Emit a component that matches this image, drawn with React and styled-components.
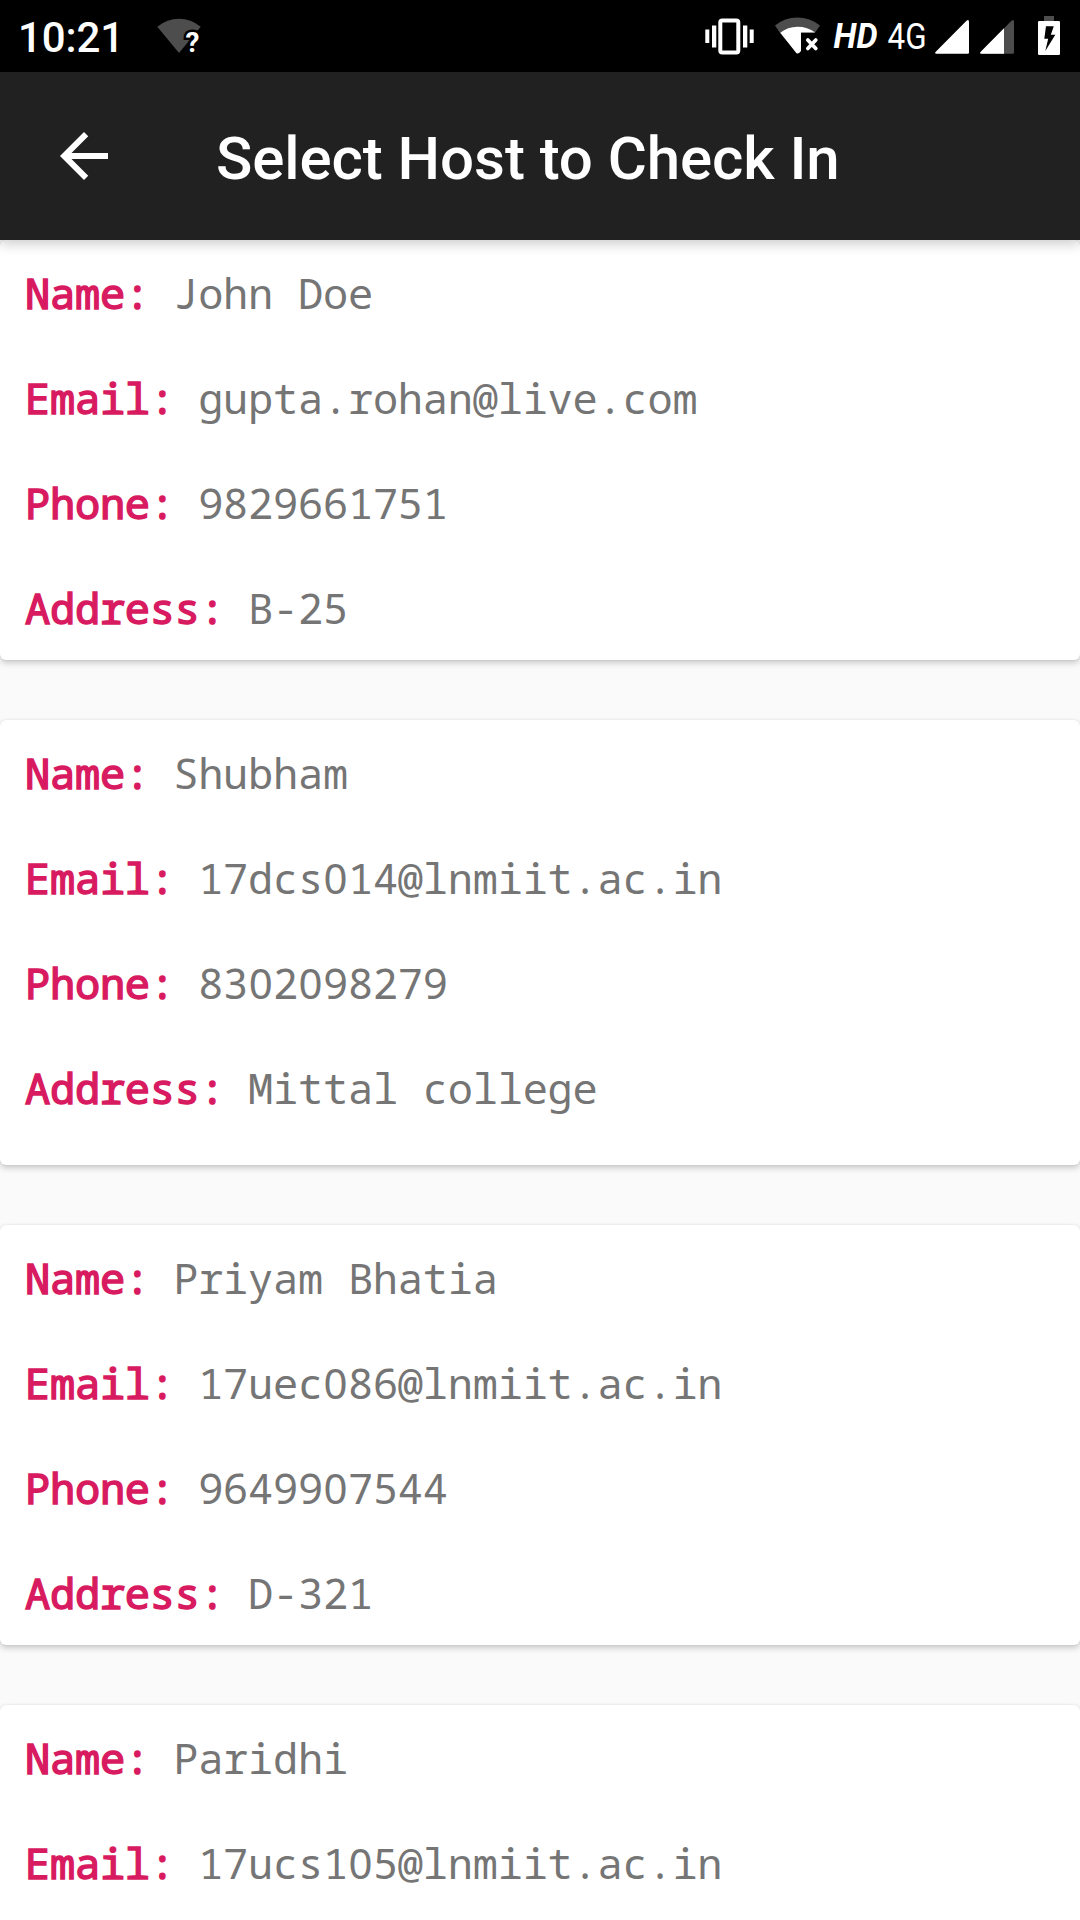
import React from "react";
import styled, { createGlobalStyle } from "styled-components";

const Global = createGlobalStyle`
  * { box-sizing: border-box; }
  html, body { margin: 0; padding: 0; background: #fafafa; }
`;

const Screen = styled.div`
  width: 1080px;
  height: 1920px;
  overflow: hidden;
  display: flex;
  flex-direction: column;
  background: #fafafa;
  font-family: Roboto, sans-serif;
`;

const StatusBar = styled.div`
  flex: none;
  height: 72px;
  padding: 0 18px;
  display: flex;
  align-items: center;
  justify-content: space-between;
  background: #000;
  color: #fff;
`;

const StatusGroup = styled.div`
  display: flex;
  align-items: center;
`;

const Clock = styled.span`
  width: 138px;
  padding-top: 3px;
  font-size: 42px;
  line-height: 50px;
  font-weight: 500;
  letter-spacing: -0.1px;
`;

const StatusIcon = styled.svg`
  display: block;
  flex: none;
  height: 72px;
  width: ${(p) => p.$w}px;
  margin-right: ${(p) => p.$gap || 0}px;
`;

const AppBar = styled.header`
  flex: none;
  height: 168px;
  padding-left: 48px;
  display: flex;
  align-items: center;
  background: #212121;
  color: #fff;
  position: relative;
  z-index: 1;
  box-shadow: 0 4px 12px rgba(0, 0, 0, 0.2);
`;

const BackButton = styled.button`
  width: 72px;
  height: 72px;
  padding: 0;
  border: 0;
  background: none;
  color: inherit;
`;

const BackIcon = styled.svg`
  display: block;
  width: 72px;
  height: 72px;
`;

const Title = styled.h1`
  margin: 0 0 0 96px;
  padding-top: 6px;
  font-size: 60px;
  line-height: 70px;
  font-weight: 500;
  letter-spacing: -0.07px;
  white-space: nowrap;
`;

const List = styled.main`
  flex: 1;
  min-height: 0;
  display: flex;
  flex-direction: column;
  gap: 60px;
`;

const Card = styled.section`
  flex: none;
  padding: 0 25px;
  height: ${(p) => (p.$roomy ? 445 : 420)}px;
  background: #fff;
  border-radius: 6px;
  box-shadow: 0 3px 6px rgba(0, 0, 0, 0.2), 0 0 2px rgba(0, 0, 0, 0.1);
`;

const Row = styled.div`
  height: 105px;
  padding-top: 28px;
  font-family: "Noto Sans Mono", "DejaVu Sans Mono", monospace;
  font-size: 42px;
  line-height: 50px;
  letter-spacing: -0.24px;
  white-space: pre;
  color: #757575;
`;

const Label = styled.span`
  margin-right: -1.6px;
  color: #d81b60;
  -webkit-text-stroke: 1.5px #d81b60;
`;

/* The mono face slashes its zero; the proportional one keeps it open. */
const OpenZero = styled.span`
  margin: 0 0.014em;
  font-family: "Noto Sans", sans-serif;
  line-height: 0;
`;

const hosts = [
  { name: "John Doe", email: "gupta.rohan@live.com", phone: "9829661751", address: "B-25" },
  { name: "Shubham", email: "17dcs014@lnmiit.ac.in", phone: "8302098279", address: "Mittal college", roomy: true },
  { name: "Priyam Bhatia", email: "17uec086@lnmiit.ac.in", phone: "9649907544", address: "D-321" },
  { name: "Paridhi", email: "17ucs105@lnmiit.ac.in" },
];

const fields = [
  ["Name", "name"],
  ["Email", "email"],
  ["Phone", "phone"],
  ["Address", "address"],
];

function Value({ text }) {
  return text
    .split(/(0)/)
    .map((part, i) => (part === "0" ? <OpenZero key={i}>0</OpenZero> : part));
}

function HostCard({ host }) {
  return (
    <Card $roomy={host.roomy}>
      {fields
        .filter(([, key]) => host[key])
        .map(([label, key]) => (
          <Row key={key}>
            <Label>{label}:</Label> <Value text={host[key]} />
          </Row>
        ))}
    </Card>
  );
}

export default function App() {
  return (
    <Screen>
      <Global />
      <StatusBar>
        <StatusGroup>
          <Clock>10:21</Clock>
          <StatusIcon $w={46} viewBox="156 0 46 72">
            <path d="M157.3 26.7Q167 18.7 179 18.7T200.7 26.7L179 53Z" fill="#4d4d4d" />
            <text x="185.5" y="52" fontFamily="Roboto, sans-serif" fontWeight="700" fontSize="28" fill="#fff" stroke="#000" strokeWidth="5" paintOrder="stroke">?</text>
          </StatusIcon>
        </StatusGroup>
        <StatusGroup>
          <StatusIcon $w={50} $gap={19} viewBox="705 0 50 72">
            <rect x="720.3" y="20.5" width="18" height="32" rx="2" fill="none" stroke="#fff" strokeWidth="4" />
            <path d="M705.3 29.5h4v13.5h-4zM712 25.5h4.3v22H712zM743 25.5h4.3v22H743zM749.7 29.5h4v13.5h-4z" fill="#fff" />
          </StatusIcon>
          <StatusIcon $w={47} $gap={11} viewBox="774 0 47 72">
            <path d="M775 25.5Q784.5 17.4 797.3 17.4T820 25.5L815.2 32.5H801V49.5L797.3 53.5L780 33Z" fill="#4d4d4d" />
            <path d="M780.3 32.8Q787.5 26.7 797.5 26.7T815.2 32.5H801V51Q797.5 55.5 795.5 52Z" fill="#fff" />
            <path d="M807.8 40L815.8 48.5M815.8 40L807.8 48.5" stroke="#fff" strokeWidth="3.7" strokeLinecap="round" />
          </StatusIcon>
          <StatusIcon $w={50} $gap={3} viewBox="832 0 50 72">
            <text x="833.5" y="48" fontFamily="Roboto, sans-serif" fontWeight="700" fontStyle="italic" fontSize="35.5" fill="#fff" textLength="44" lengthAdjust="spacingAndGlyphs">HD</text>
          </StatusIcon>
          <StatusIcon $w={46} $gap={4} viewBox="885 0 46 72">
            <text x="887.5" y="48.5" fontFamily="Roboto, sans-serif" fontSize="36" fill="#fff" textLength="39" lengthAdjust="spacingAndGlyphs">4G</text>
          </StatusIcon>
          <StatusIcon $w={35} $gap={10} viewBox="935 0 35 72">
            <path d="M936 51.5L966.5 20.7Q969 19 969 22V52.5Q969 53.7 967.8 53.7H936.5Q934 53.5 936 51.5Z" fill="#fff" />
          </StatusIcon>
          <StatusIcon $w={35} $gap={22} viewBox="980 0 35 72">
            <path d="M981 51.5L1011.5 20.7Q1014 19 1014 22V52.5Q1014 53.7 1012.8 53.7H981.5Q979 53.5 981 51.5Z" fill="#4d4d4d" />
            <path d="M981 51.5L1004 28.3V53.7H981.5Q979 53.5 981 51.5Z" fill="#fff" />
          </StatusIcon>
          <StatusIcon $w={25} viewBox="1037 0 25 72">
            <path d="M1044 16h10v5h-10z" fill="#4d4d4d" />
            <rect x="1038" y="21" width="22" height="34" rx="1.2" fill="#fff" />
            <path d="M1046 26.3H1053.8L1050.8 34.8H1055.3L1045.3 51L1048.2 38.7H1044.3Z" fill="#000" />
          </StatusIcon>
        </StatusGroup>
      </StatusBar>
      <AppBar>
        <BackButton aria-label="Back">
          <BackIcon viewBox="0 0 24 24">
            <path fill="#fff" d="M20 11H7.83l5.59-5.59L12 4l-8 8 8 8 1.41-1.41L7.83 13H20v-2z" />
          </BackIcon>
        </BackButton>
        <Title>Select Host to Check In</Title>
      </AppBar>
      <List>
        {hosts.map((h) => (
          <HostCard key={h.name} host={h} />
        ))}
      </List>
    </Screen>
  );
}
